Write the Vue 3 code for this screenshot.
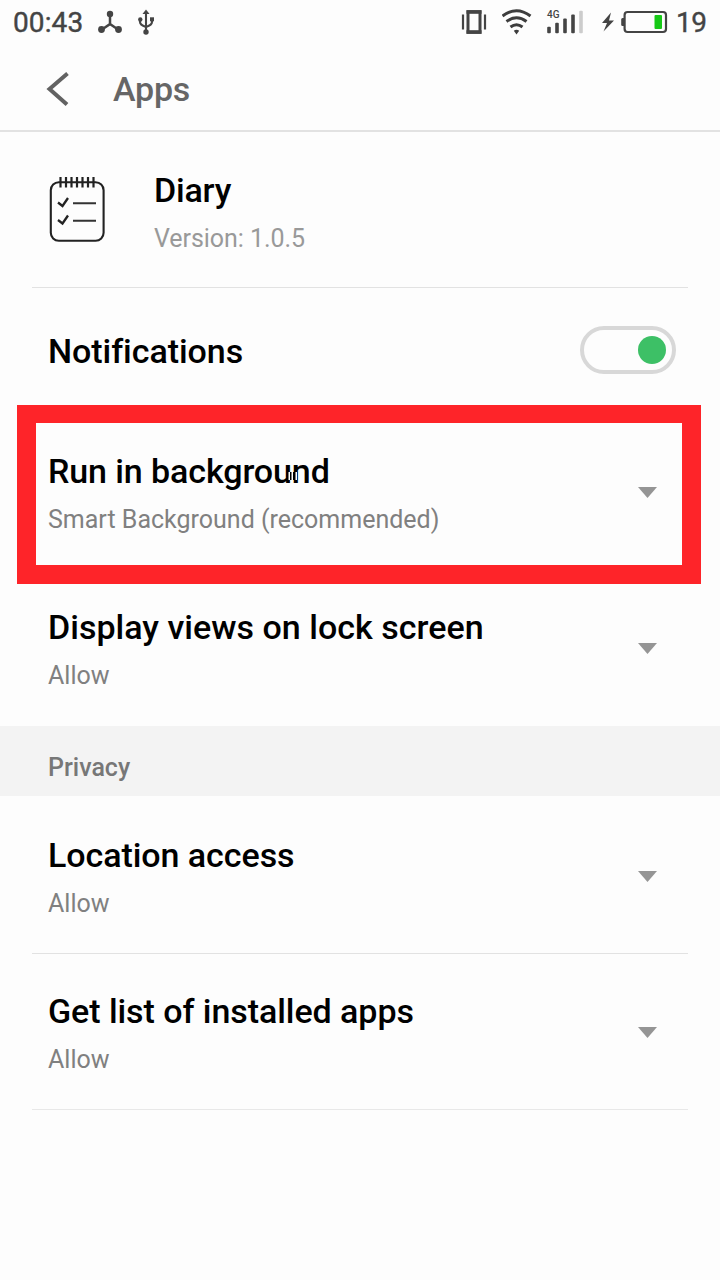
<script setup>
const accessRows = [
  { id: 'run', title: 'Run in background', value: 'Smart Background (recommended)', marked: true },
  { id: 'lock', title: 'Display views on lock screen', value: 'Allow' },
]
const privacyRows = [
  { id: 'location', title: 'Location access', value: 'Allow' },
  { id: 'installed', title: 'Get list of installed apps', value: 'Allow' },
]
const ringX = [60.5, 66, 71.5, 77, 82.5, 88, 93.5]
</script>

<template>
  <main class="screen">
    <div class="status">
      <span class="clock">00:43</span>
      <svg class="hub" width="24" height="24" viewBox="98 10 24 24">
        <path d="M110 14V24L102 29.500M110 24L118 29.500" fill="none" stroke="#444" stroke-width="2.500" />
        <circle cx="110" cy="14" r="3.200" fill="#444" />
        <circle cx="101.500" cy="29.500" r="3.400" fill="#444" />
        <circle cx="118.500" cy="29.500" r="3.400" fill="#444" />
      </svg>
      <svg class="usb" width="18" height="26" viewBox="137 9 18 26">
        <path d="M146 13V32M140 20V22Q140 25 146 27Q152 25 152 22V20" fill="none" stroke="#444" stroke-width="2.100" />
        <path d="M146 9.500L149.500 14H142.500Z" fill="#444" />
        <circle cx="140.300" cy="19.500" r="2.200" fill="#444" />
        <rect x="150" y="17.300" width="4" height="4" fill="#444" />
        <circle cx="146" cy="32" r="2.700" fill="#444" />
      </svg>
      <span class="fill"></span>
      <svg class="vibrate" width="26" height="26" viewBox="461 9 26 26">
        <path d="M463 14.500V29.500M485 14.500V29.500" stroke="#444" stroke-width="2.200" />
        <rect x="468" y="11.700" width="12" height="20.600" fill="none" stroke="#444" stroke-width="3" />
        <path d="M466.500 12H481.500M466.500 32H481.500" stroke="#444" stroke-width="3.600" />
      </svg>
      <svg class="wifi" width="30" height="26" viewBox="502 9 30 26">
        <g fill="none" stroke="#3d3d3d" stroke-width="3">
          <path d="M502.500 16Q516.500 5.500 530.500 16" />
          <path d="M506.500 21.500Q516.500 14 526.500 21.500" />
          <path d="M510.500 27Q516.500 22.500 522.500 27" />
        </g>
        <path d="M513.800 30.800Q516.500 28.800 519.200 30.800L516.500 34.500Z" fill="#3d3d3d" />
      </svg>
      <svg class="signal" width="38" height="26" viewBox="546 9 38 26">
        <text x="547" y="18.300" class="network">4G</text>
        <rect x="547.200" y="26.800" width="3.600" height="6.500" rx="1" fill="#444" />
        <rect x="555.200" y="22.800" width="3.600" height="10.500" rx="1" fill="#444" />
        <rect x="563.200" y="18.600" width="3.600" height="14.700" rx="1" fill="#444" />
        <rect x="571.200" y="14.500" width="3.600" height="18.800" rx="1" fill="#444" />
        <rect x="579.200" y="10.800" width="3.600" height="22.500" rx="1" fill="#ccc" />
      </svg>
      <svg class="power" width="66" height="26" viewBox="602 9 66 26">
        <path d="M611 12.500L602 23H607L603.500 31.500L614 20.500H609Z" fill="#444" />
        <path d="M624 18H622.500Q621.200 18 621.200 19.500V24.500Q621.200 26 622.500 26H624Z" fill="#444" />
        <rect x="624.600" y="12" width="41.400" height="20" rx="3" fill="none" stroke="#444" stroke-width="2.200" />
        <rect x="654.500" y="15" width="7.500" height="14" rx="1" fill="#16c916" />
      </svg>
      <span class="level">19</span>
    </div>

    <header class="bar">
      <svg width="24" height="36" viewBox="46 71 24 36">
        <path d="M67.500 73.500L49.500 89L67 104.500" fill="none" stroke="#626262" stroke-width="4" />
      </svg>
      <h1>Apps</h1>
    </header>

    <section class="app">
      <svg width="58" height="68" viewBox="48 176 58 68">
        <rect x="50.800" y="182.200" width="52.800" height="58.600" rx="8" fill="none" stroke="#222" stroke-width="2.100" />
        <path v-for="x in ringX" :key="x" :d="`M${x} 177V187.500`" stroke="#222" stroke-width="2.200" />
        <path d="M73 203.200H96M73 220.700H96" stroke="#333" stroke-width="2" />
        <path d="M58 202.500L62.500 206L68 198M58 220L62.500 223.500L68 215.500" fill="none" stroke="#222" stroke-width="2.300" />
      </svg>
      <div>
        <h2>Diary</h2>
        <p>Version: 1.0.5</p>
      </div>
    </section>

    <section class="notify">
      <h2>Notifications</h2>
      <span class="toggle"><i></i></span>
    </section>

    <section v-for="row in accessRows" :key="row.id" class="row" :class="row.id">
      <div class="copy">
        <h2>{{ row.title }}</h2>
        <p>{{ row.value }}</p>
      </div>
      <svg class="arrow" width="20" height="12" viewBox="0 0 20 12"><path d="M1 0H20L10.500 11Z" /></svg>
      <svg v-if="row.marked" class="specks" width="16" height="10" viewBox="286 471 16 10">
        <path d="M288.500 472h1.500v8h-1.500zM291.500 471.500h1.300v8h-1.300zM295.500 472h1.500v8h-1.500z" fill="#fff" />
        <path d="M290 472h1.500v8h-1.500zM293 472h2v8h-2z" fill="#000" />
      </svg>
      <div v-if="row.marked" class="marker"></div>
    </section>

    <h3 class="group">Privacy</h3>

    <section v-for="row in privacyRows" :key="row.id" class="row lined" :class="row.id">
      <div class="copy">
        <h2>{{ row.title }}</h2>
        <p>{{ row.value }}</p>
      </div>
      <svg class="arrow" width="20" height="12" viewBox="0 0 20 12"><path d="M1 0H20L10.500 11Z" /></svg>
    </section>
  </main>
</template>

<style>
body { background: #fdfdfd; }
</style>

<style scoped>
.screen {
  box-sizing: border-box;
  height: 1280px;
  overflow: hidden;
  background: #fdfdfd;
  font-family: Roboto, "Liberation Sans", sans-serif;
}
h1, h2, h3, p { margin: 0; white-space: nowrap; }
svg { display: block; flex: none; }
h2 { font-size: 34px; font-weight: 500; line-height: 40px; letter-spacing: -0.06px; color: #000; }
p { font-size: 25px; line-height: 32px; color: #808080; }
.status {
  display: flex;
  align-items: center;
  height: 44px;
  padding: 0 14px 0 13px;
  color: #444;
  font-size: 28px;
  -webkit-text-stroke: 0.4px #444;
}
.clock { width: 72px; margin-right: 13px; letter-spacing: 0.1px; }
.hub { margin-right: 15px; }
.fill { flex: 1; }
.vibrate { margin-right: 15px; }
.wifi { margin-right: 14px; }
.signal { margin-right: 18px; }
.power { margin-right: 8px; }
.level { width: 30px; letter-spacing: -0.4px; }
.network { font-size: 10px; font-weight: 500; fill: #444; stroke: none; -webkit-text-stroke: 0; }
.bar {
  display: flex;
  align-items: center;
  gap: 43px;
  box-sizing: border-box;
  height: 88px;
  padding: 4px 46px 0;
  border-bottom: 2px solid #e2e2e2;
}
h1 { font-size: 34px; font-weight: 500; line-height: 40px; letter-spacing: -0.2px; color: #666; }
.app {
  display: flex;
  gap: 48px;
  box-sizing: border-box;
  height: 156px;
  margin: 0 32px;
  padding: 38px 16px 0;
  border-bottom: 1px solid #e2e2e2;
}
.app > svg { margin-top: 6px; }
.app h2 { letter-spacing: -0.2px; }
.app p { margin-top: 13px; letter-spacing: -0.05px; color: #999; }
.notify {
  display: flex;
  align-items: center;
  justify-content: space-between;
  height: 126px;
  padding: 0 44px 0 48px;
}
.toggle {
  display: flex;
  align-items: center;
  justify-content: flex-end;
  box-sizing: border-box;
  width: 96px;
  height: 48px;
  margin-bottom: 2px;
  padding-right: 6px;
  border: 4px solid #d8d8d8;
  border-radius: 24px;
}
.toggle i { width: 28px; height: 28px; border-radius: 50%; background: #3dc066; }
.row {
  position: relative;
  display: flex;
  justify-content: space-between;
  box-sizing: border-box;
  height: 156px;
  padding: 37px 63px 0 48px;
}
.row p { margin-top: 13px; }
.run h2 { letter-spacing: -0.1px; }
.lock h2 { letter-spacing: 0.02px; }
.arrow { margin-top: 36px; fill: #959595; }
.lined { height: 158px; margin: 0 32px; padding: 39px 31px 0 16px; border-bottom: 1px solid #e2e2e2; }
.lined + .lined { height: 156px; padding-top: 37px; border-bottom-color: #e8e8e8; }
.marker {
  position: absolute;
  left: 17px;
  top: -9px;
  width: 646px;
  height: 142px;
  border: 18px solid #fe2429;
  border-width: 18px 19px 19px;
}
.specks { position: absolute; left: 286px; top: 57px; }
.group {
  height: 70px;
  padding: 14px 48px 0;
  box-sizing: border-box;
  background: #f3f3f3;
  color: #777;
  font-size: 25px;
  font-weight: 500;
  line-height: 56px;
}
</style>
